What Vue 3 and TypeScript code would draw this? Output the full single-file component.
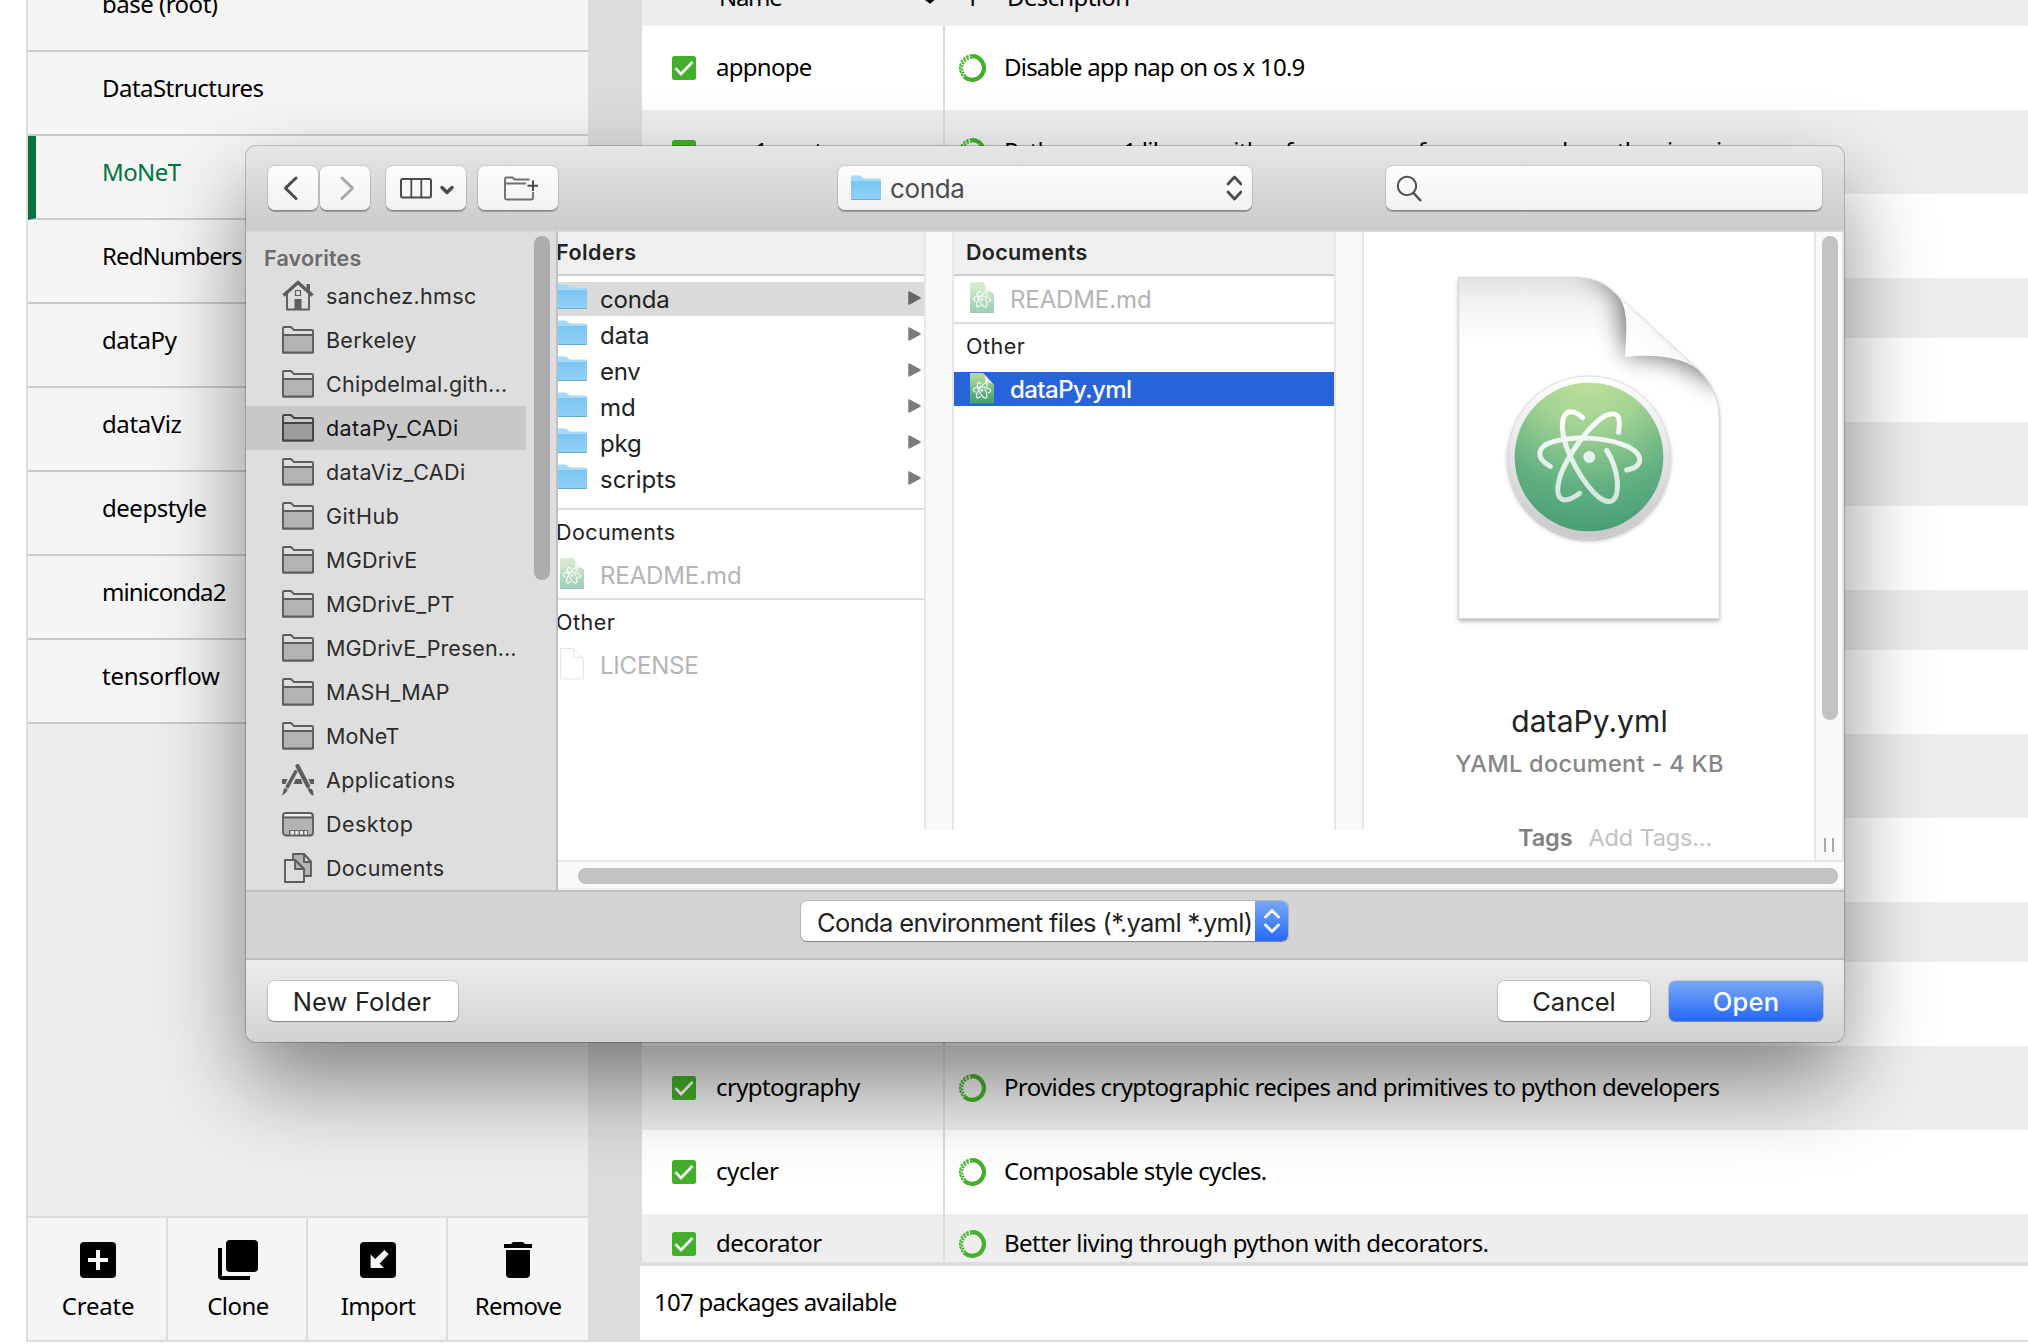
<script setup lang="ts">
interface Label { text: string; w: number }
interface Place extends Label { icon: 'home' | 'folder' | 'apps' | 'desktop' | 'docs'; selected?: boolean }
interface Pkg { name?: Label; desc?: Label; short?: boolean }

// Tracks a label out (or in) so that it fills the given width in pixels.
const vFit = {
  mounted(el: HTMLElement, binding: { value: number }) {
    const natural = el.getBoundingClientRect().width
    const count = (el.textContent ?? '').length
    el.style.letterSpacing = ((binding.value + 1.5 - natural) / count).toFixed(3) + 'px'
  },
}

const environments: (Label & { active?: boolean })[] = [
  { text: 'base (root)', w: 114 },
  { text: 'DataStructures', w: 160 },
  { text: 'MoNeT', w: 77, active: true },
  { text: 'RedNumbers', w: 138 },
  { text: 'dataPy', w: 73 },
  { text: 'dataViz', w: 78 },
  { text: 'deepstyle', w: 103 },
  { text: 'miniconda2', w: 122 },
  { text: 'tensorflow', w: 116 },
]

const packages: Pkg[] = [
  { name: { text: 'appnope', w: 94 }, desc: { text: 'Disable app nap on os x 10.9', w: 299 } },
  { name: { text: 'asn1crypto', w: 119 }, desc: { text: 'Python asn1 library with a focus on performance and a pythonic api', w: 716 } },
  {},
  { short: true },
  {},
  {},
  {},
  { short: true },
  {},
  {},
  {},
  { short: true },
  {},
  { name: { text: 'cryptography', w: 142 }, desc: { text: 'Provides cryptographic recipes and primitives to python developers', w: 714 } },
  { name: { text: 'cycler', w: 61 }, desc: { text: 'Composable style cycles.', w: 261 } },
  { name: { text: 'decorator', w: 104 }, desc: { text: 'Better living through python with decorators.', w: 483 }, short: true },
]

const places: Place[] = [
  { text: 'sanchez.hmsc', w: 149, icon: 'home' },
  { text: 'Berkeley', w: 89, icon: 'folder' },
  { text: 'Chipdelmal.gith...', w: 180, icon: 'folder' },
  { text: 'dataPy_CADi', w: 131, icon: 'folder', selected: true },
  { text: 'dataViz_CADi', w: 138, icon: 'folder' },
  { text: 'GitHub', w: 72, icon: 'folder' },
  { text: 'MGDrivE', w: 90, icon: 'folder' },
  { text: 'MGDrivE_PT', w: 127, icon: 'folder' },
  { text: 'MGDrivE_Presen...', w: 189, icon: 'folder' },
  { text: 'MASH_MAP', w: 122, icon: 'folder' },
  { text: 'MoNeT', w: 72, icon: 'folder' },
  { text: 'Applications', w: 128, icon: 'apps' },
  { text: 'Desktop', w: 86, icon: 'desktop' },
  { text: 'Documents', w: 117, icon: 'docs' },
]

const folders: Label[] = [
  { text: 'conda', w: 68 },
  { text: 'data', w: 48 },
  { text: 'env', w: 39 },
  { text: 'md', w: 34 },
  { text: 'pkg', w: 40 },
  { text: 'scripts', w: 75 },
]

const orbits = [
  'M398 449C366 420 336 424 337 480C340 545 400 650 448 689C490 718 505 690 502 640C498 600 485 570 470 547',
  'M506 493C514 441 500 429 466 443C412 475 352 566 332 620C310 690 332 718 389 676',
  'M301 595C255 570 260 535 310 521C380 500 480 510 538 538C583 563 578 597 530 606',
]
</script>

<template>
  <div class="screen">
    <svg width="0" height="0" class="defs">
      <defs>
        <linearGradient id="green" x1="0" y1="0" x2="0" y2="1">
          <stop offset="0" stop-color="#b9de9b" /><stop offset=".25" stop-color="#9fd094" />
          <stop offset=".6" stop-color="#67b384" /><stop offset="1" stop-color="#459b72" />
        </linearGradient>
        <linearGradient id="blue" x1="0" y1="0" x2="0" y2="1">
          <stop offset="0" stop-color="#7cc5f2" /><stop offset="1" stop-color="#8fd2f9" />
        </linearGradient>
        <symbol id="bluefolder" viewBox="0 0 30 26">
          <path d="M0 2Q0 .5 1.500 .5H8.500Q10 .5 11 2L12.500 3.500H28.500Q30 3.500 30 5V10H0Z" fill="#a3dafa" />
          <path d="M0 6H30V24Q30 25 29 25H1Q0 25 0 24Z" fill="url(#blue)" />
          <path d="M0 24.500H30" stroke="#6bacd2" />
        </symbol>
        <symbol id="atomfile" viewBox="0 0 24 32">
          <path d="M0 0H13L24 12V31H0Z" fill="url(#green)" />
          <path d="M0 30.500H24" stroke="#3d8a63" />
          <path d="M13 0C15.500 2.500 15.500 6 15 9.500C18.500 9.300 22 9.500 24 12Z" fill="#e9f3e4" />
          <g transform="translate(-12.300 -15.500) scale(.058)" fill="none" stroke="#eefaf0" stroke-width="22" stroke-linecap="round">
            <path v-for="o in orbits" :key="o" :d="o" />
            <circle cx="418" cy="567" r="12" fill="#eefaf0" />
          </g>
        </symbol>
        <symbol id="check" viewBox="0 0 24 24">
          <rect width="24" height="24" rx="2.500" fill="#43b02a" />
          <path d="M3.500 12.200L9 18L20.500 6" fill="none" stroke="#fff" stroke-width="2.600" />
        </symbol>
        <symbol id="ring" viewBox="0 0 28 28">
          <path d="M14 2.200A11.800 11.800 0 1 1 6.500 23" fill="none" stroke="#43b02a" stroke-width="4.200" />
          <path d="M7.500 24.500A12.800 12.800 0 0 1 14 1.200" fill="none" stroke="#43b02a" stroke-width="2" stroke-dasharray="2.600 1" />
          <path d="M7.500 22A10.600 10.600 0 0 1 15 3.600" fill="none" stroke="#43b02a" stroke-width="2.300" stroke-dasharray="1.900 1.300" />
        </symbol>
      </defs>
    </svg>

    <section class="envs">
      <div class="envlist">
        <div v-for="e in environments" :key="e.text" class="env" :class="{ active: e.active }">
          <span v-fit="e.w">{{ e.text }}</span>
        </div>
      </div>
      <div class="actions">
        <button class="action">
          <svg width="48" height="48" viewBox="0 0 24 24"><path d="M19 3H5a2 2 0 0 0-2 2v14a2 2 0 0 0 2 2h14a2 2 0 0 0 2-2V5a2 2 0 0 0-2-2zm-2 10h-4v4h-2v-4H7v-2h4V7h2v4h4z" /></svg>
          <span v-fit="71">Create</span>
        </button>
        <button class="action">
          <svg width="48" height="48" viewBox="0 0 24 24"><path d="M4 6H2v14a2 2 0 0 0 2 2h14v-2H4zM20 2H8a2 2 0 0 0-2 2v12a2 2 0 0 0 2 2h12a2 2 0 0 0 2-2V4a2 2 0 0 0-2-2z" /></svg>
          <span v-fit="60">Clone</span>
        </button>
        <button class="action">
          <svg width="48" height="48" viewBox="0 0 24 24"><path d="M19 3H5a2 2 0 0 0-2 2v14a2 2 0 0 0 2 2h14a2 2 0 0 0 2-2V5a2 2 0 0 0-2-2zM15 16H8.300V9.200L10.600 11.500L15.200 7L17.300 9.100L12.800 13.700Z" /></svg>
          <span v-fit="73">Import</span>
        </button>
        <button class="action">
          <svg width="48" height="48" viewBox="0 0 24 24"><path d="M6 19a2 2 0 0 0 2 2h8a2 2 0 0 0 2-2V7H6zM19 4h-3.500l-1-1h-5l-1 1H5v2h14z" /></svg>
          <span v-fit="85">Remove</span>
        </button>
      </div>
    </section>

    <section class="pkgs">
      <header class="thead">
        <div class="h-name"><span v-fit="61">Name</span></div>
        <div class="h-sort"><svg width="10" height="4" viewBox="0 0 10 4"><path d="M0 0H9.500L5 3.800Z" /></svg></div>
        <div class="h-t"><span>T</span></div>
        <div class="h-desc"><span v-fit="121">Description</span></div>
      </header>
      <div class="rows">
        <div v-for="(p, i) in packages" :key="i" class="row" :class="{ short: p.short, odd: i % 2 }">
          <div class="c-name">
            <template v-if="p.name">
              <svg width="24" height="24"><use href="#check" /></svg>
              <span v-fit="p.name.w">{{ p.name.text }}</span>
            </template>
          </div>
          <div v-if="p.desc" class="c-desc">
            <svg width="28" height="28"><use href="#ring" /></svg>
            <span v-fit="p.desc.w">{{ p.desc.text }}</span>
          </div>
        </div>
      </div>
      <footer class="count"><span v-fit="241">107 packages available</span></footer>
    </section>

    <div class="dialog">
      <div class="toolbar">
        <button class="tb back"><svg width="50" height="44" viewBox="0 0 50 44"><path d="M28 12L17.500 22.200L28 32.500" fill="none" stroke="#4b4b4b" stroke-width="3" stroke-linecap="round" stroke-linejoin="round" /></svg></button>
        <button class="tb fwd"><svg width="50" height="44" viewBox="0 0 50 44"><path d="M22 12L32.500 22.200L22 32.500" fill="none" stroke="#a8a8a8" stroke-width="3" stroke-linecap="round" stroke-linejoin="round" /></svg></button>
        <button class="tb view">
          <svg width="80" height="44" viewBox="0 0 80 44" fill="none" stroke="#4b4b4b"><rect x="15" y="13" width="30" height="18.500" rx="1.500" stroke-width="2" /><path d="M25.300 13V31.500M35.300 13V31.500" stroke-width="1.800" /><path d="M56 21.500L61 26.500L66 21.500" stroke-width="3.500" stroke-linecap="round" stroke-linejoin="round" /></svg>
        </button>
        <button class="tb newf">
          <svg width="80" height="44" viewBox="0 0 80 44" fill="none" stroke="#707070" stroke-width="1.900"><path d="M51.500 13.500H36.500L34.500 11.500H28.500Q27 11.500 27 13V32Q27 33.500 28.500 33.500H53.500Q55 33.500 55 32V26M27.500 17.500H48" /><path d="M55 14.500V25M49.500 19.700H60" stroke="#4b4b4b" stroke-width="2" /></svg>
        </button>
        <div class="tb path">
          <svg width="30" height="26"><use href="#bluefolder" /></svg>
          <span v-fit="73">conda</span>
          <svg class="updown" width="16" height="26" viewBox="0 0 16 26"><path d="M2 9L8.500 2L15 9M2 17L8.500 24L15 17" fill="none" stroke="#4b4b4b" stroke-width="2.700" stroke-linecap="round" stroke-linejoin="round" /></svg>
        </div>
        <div class="tb search">
          <svg width="28" height="30" viewBox="0 0 28 30" fill="none" stroke="#4f4f4f"><circle cx="11" cy="13" r="9.200" stroke-width="2" /><path d="M17.500 20L25 28" stroke-width="2.500" /></svg>
        </div>
      </div>

      <div class="browser">
        <aside class="side">
          <div class="fav"><span v-fit="96">Favorites</span></div>
          <div v-for="p in places" :key="p.text" class="place" :class="{ sel: p.selected }">
            <svg v-if="p.icon === 'folder'" width="32" height="32" viewBox="0 0 32 32">
              <path d="M1 4Q1 3 2 3H9L12 6H30Q31 6 31 7V28.500H1Z" class="line light" /><path d="M1 11H31V27.500Q31 28.500 30 28.500H2Q1 28.500 1 27.500Z" class="line fillg" />
            </svg>
            <svg v-else-if="p.icon === 'home'" width="32" height="32" viewBox="0 0 32 32">
              <path d="M5 14V29.500H27V14" class="line" /><path d="M1.500 15.500L16 2.500L30.500 15.500" fill="none" stroke="#5d5d5d" stroke-width="3.500" /><path d="M24.500 4H28V12L24.500 9Z" fill="#5d5d5d" />
              <path d="M13.500 10.500H18.500V15.500H13.500Z" fill="none" stroke="#5d5d5d" stroke-width="1.200" /><path d="M12.500 19H19.500V30H12.500Z" fill="#5d5d5d" />
            </svg>
            <svg v-else-if="p.icon === 'apps'" width="32" height="32" viewBox="0 0 32 32">
              <path d="M0 15H5.500L3.500 20H0ZM13.500 15H19L20.500 20H11.500ZM26.500 15H32V20H28.500Z" fill="#5d5d5d" />
              <path d="M13 9L3 27" stroke="#5d5d5d" stroke-width="3.600" stroke-dasharray="17 1 3" /><path d="M0 32L2 25L5 27.500Z" fill="#5d5d5d" />
              <path d="M15.500 2L26 22" stroke="#5d5d5d" stroke-width="4.200" stroke-linecap="round" /><path d="M25.500 24L30 25Q32 28 31.500 32Q27 30 25.500 24Z" fill="#5d5d5d" /><circle cx="13.500" cy="8" r="2" fill="#5d5d5d" />
            </svg>
            <svg v-else-if="p.icon === 'desktop'" width="32" height="32" viewBox="0 0 32 32">
              <rect x="1" y="5" width="30" height="22.500" rx="3" class="line fillg" /><path d="M3 6H29V8.500H2Z" fill="#eee" /><path d="M1 9.500H31" class="line" />
              <path d="M7 22H26V27H7Z" fill="#666" /><path d="M8.500 23H12V26.500H8.500ZM13.300 23H16.500V26.500H13.300ZM18 23H21V26.500H18ZM22.500 23H25V26.500H22.500Z" fill="#eee" />
            </svg>
            <svg v-else width="32" height="32" viewBox="0 0 32 32">
              <path d="M11 2H22L29 10V24H11Z" class="line fillg" /><path d="M22 2V10H29Z" class="line light" />
              <path d="M3 8H13L22 17V30H3Z" class="line light" /><path d="M13 8V17H22Z" class="line fillg" />
            </svg>
            <span v-fit="p.w">{{ p.text }}</span>
          </div>
          <i class="side-thumb"></i>
        </aside>

        <div class="finder">
          <div class="columns">
            <div class="col one">
              <div class="chead"><span v-fit="79">Folders</span></div>
              <div class="gap6"></div>
              <div v-for="(f, i) in folders" :key="f.text" class="file" :class="{ cur: i === 0 }">
                <svg class="fold" width="30" height="26"><use href="#bluefolder" /></svg>
                <span v-fit="f.w">{{ f.text }}</span>
                <svg class="tri" width="13" height="14" viewBox="0 0 13 14"><path d="M1 1L12 7L1 13Z" stroke-width="1.500" stroke-linejoin="round" /></svg>
              </div>
              <div class="sub first"><span v-fit="118">Documents</span></div>
              <div class="file dim tall"><svg class="doc" width="24" height="32"><use href="#atomfile" /></svg><span v-fit="140">README.md</span></div>
              <div class="sub"><span v-fit="58">Other</span></div>
              <div class="file dim tall">
                <svg class="doc plain" width="24" height="32" viewBox="0 0 24 32"><path d="M.5 .5H14L23.500 10.500V31H.5Z" fill="#fff" stroke="#cfcfcf" /><path d="M14 .5V9.500H23" fill="none" stroke="#cfcfcf" /></svg>
                <span v-fit="97">LICENSE</span>
              </div>
            </div>
            <div class="grip"></div>
            <div class="col two">
              <div class="chead"><span v-fit="120">Documents</span></div>
              <div class="file dim readme"><svg class="doc" width="24" height="32"><use href="#atomfile" /></svg><span v-fit="140">README.md</span></div>
              <div class="sub other"><span v-fit="58">Other</span></div>
              <div class="file chosen"><svg class="doc" width="24" height="32"><use href="#atomfile" /></svg><span v-fit="120">dataPy.yml</span></div>
            </div>
            <div class="grip g2"></div>
            <div class="preview">
              <svg class="paper" width="280" height="362" viewBox="0 0 840 1086">
                <defs>
                  <linearGradient id="top" x1="0" y1="0" x2="0" y2="1"><stop offset="0" stop-color="#e2e2e2" /><stop offset=".07" stop-color="#f2f2f2" /><stop offset=".2" stop-color="#fff" /></linearGradient>
                  <linearGradient id="curl" gradientUnits="userSpaceOnUse" x1="640" y1="165" x2="560" y2="245"><stop offset="0" stop-color="#e2e2e2" /><stop offset=".4" stop-color="#fafafa" /><stop offset="1" stop-color="#fff" /></linearGradient>
                  <linearGradient id="rim" x1="0" y1="0" x2="0" y2="1"><stop offset="0" stop-color="#fff" /><stop offset="1" stop-color="#c8c8c8" /></linearGradient>
                  <linearGradient id="orbit" gradientUnits="userSpaceOnUse" x1="0" y1="430" x2="0" y2="710"><stop offset="0" stop-color="#fff" /><stop offset="1" stop-color="#cfe5da" /></linearGradient>
                  <radialGradient id="disc" cx=".5" cy="-.1" r="1.150"><stop offset="0" stop-color="#c3e49d" /><stop offset=".35" stop-color="#a3d293" /><stop offset=".7" stop-color="#62b082" /><stop offset="1" stop-color="#459b72" /></radialGradient>
                  <filter id="soft" x="-50%" y="-50%" width="200%" height="200%"><feGaussianBlur stdDeviation="36" /></filter>
                  <filter id="drop" x="-10%" y="-10%" width="120%" height="120%"><feDropShadow dx="0" dy="7" stdDeviation="6" flood-opacity=".33" /></filter>
                  <clipPath id="sheet"><path d="M26 28H370C440 30 470 50 500 80L745 305C785 345 808 390 808 460V1052H26Z" /></clipPath>
                </defs>
                <path filter="url(#drop)" d="M26 28H370C440 30 470 50 500 80L745 305C785 345 808 390 808 460V1052H26Z" fill="#fff" />
                <g clip-path="url(#sheet)">
                  <rect x="26" y="28" width="782" height="1024" fill="url(#top)" />
                  <path d="M400 20L500 60L528 265C620 255 700 275 830 370V250L500 0Z" fill="#000" opacity=".55" filter="url(#soft)" />
                </g>
                <path d="M26 28H370C440 30 470 50 500 80L745 305C785 345 808 390 808 460V1052H26Z" fill="none" stroke="#d4d4d4" stroke-width="3" />
                <path d="M500 80C540 120 528 200 526 267C610 258 690 265 745 305Z" fill="url(#curl)" />
                <circle cx="417" cy="567" r="243" fill="url(#rim)" stroke="#cfcfcf" stroke-width="2" filter="url(#drop)" />
                <circle cx="417" cy="567" r="223" fill="url(#disc)" />
                <g fill="none" stroke="url(#orbit)" stroke-width="15" stroke-linecap="round"><path v-for="o in orbits" :key="o" :d="o" /></g>
                <circle cx="418" cy="567" r="18" fill="#e6f2ec" />
              </svg>
              <div class="title"><span v-fit="155">dataPy.yml</span></div>
              <div class="kind"><span v-fit="267">YAML document - 4 KB</span></div>
              <div class="tags"><b v-fit="53">Tags</b><span v-fit="122">Add Tags...</span></div>
            </div>
            <div class="vtrack"><i class="vthumb"></i><i class="bars"></i></div>
          </div>
          <div class="htrack"><i class="hthumb"></i></div>
        </div>
      </div>

      <div class="filter">
        <div class="select">
          <span v-fit="434">Conda environment files (*.yaml *.yml)</span>
          <b><svg width="16" height="26" viewBox="0 0 16 26"><path d="M1.500 9L8 2.500L14.500 9M1.500 17L8 23.500L14.500 17" fill="none" stroke="#fff" stroke-width="2.700" stroke-linecap="round" stroke-linejoin="round" /></svg></b>
        </div>
      </div>
      <div class="buttons">
        <button class="btn nf"><span v-fit="137">New Folder</span></button>
        <button class="btn cancel"><span v-fit="82">Cancel</span></button>
        <button class="btn open"><span v-fit="65">Open</span></button>
      </div>
    </div>
  </div>
</template>

<style>
body { margin: 0; background: #fff; overflow: hidden; }
</style>

<style scoped>
* { box-sizing: border-box; }
button { border: 0; padding: 0; background: none; font: inherit; color: inherit; }
span, b { display: inline-block; white-space: nowrap; }
svg { display: block; flex: none; }
.defs { position: absolute; }
.screen { position: relative; width: 2028px; height: 1344px; overflow: hidden; display: flex; padding-left: 26px; background: #fff; font: 24px/32px 'Noto Sans', sans-serif; color: #000; }

.envs { width: 562px; height: 1342px; border-left: 2px solid #dcdcdc; border-bottom: 2px solid #dcdcdc; background: #ededed; display: flex; flex-direction: column; }
.envlist { flex: 1; min-height: 0; }
.env { height: 84px; border-bottom: 2px solid #cacaca; background: #f5f5f5; padding: 20px 0 0 74px; }
.env:first-child { height: 52px; padding-top: 0; }
.env:first-child span { margin-top: -12px; vertical-align: top; }
.env.active { color: #00733e; border-left: 8px solid #00733e; padding-left: 66px; }
.actions { height: 124px; display: flex; border-top: 2px solid #dcdcdc; background: #f5f5f5; }
.action { width: 140px; display: flex; flex-direction: column; align-items: center; padding: 18px 0 0 2px; gap: 6px; border-right: 2px solid #dcdcdc; }
.action:last-child { border-right: 0; padding-left: 0; }

.pkgs { flex: 1; height: 1342px; background: #dcdcdc; padding-left: 52px; display: flex; flex-direction: column; }
.thead { height: 26px; flex: none; margin-left: 2px; background: #ededed; display: flex; align-items: flex-start; padding-left: 77px; }
.thead > div { display: flex; align-items: flex-start; }
.thead span { margin-top: -19px; }
.h-name { width: 206px; }
.h-sort { width: 41px; }
.h-t { width: 41px; }
.rows { height: 1236px; flex: none; margin-left: 2px; overflow: hidden; }
.row { height: 84px; background: #fff; display: flex; align-items: center; }
.row.short { height: 60px; }
.row.odd { background: #eee; }
.c-name { width: 303px; height: 100%; border-right: 2px solid #dcdcdc; display: flex; align-items: center; padding-left: 30px; gap: 20px; }
.c-desc { display: flex; align-items: center; padding-left: 13px; gap: 18px; }
.c-name span, .c-desc span { margin-top: -2px; }
.count { height: 76px; flex: none; margin-top: 4px; background: #fff; border-bottom: 2px solid #dcdcdc; padding: 20px 0 0 14px; }

.dialog { position: absolute; left: 246px; top: 146px; width: 1598px; height: 896px; border-radius: 10px; overflow: hidden; box-shadow: 0 0 0 1px rgba(0,0,0,.2), 0 40px 88px rgba(0,0,0,.45); background: #d4d4d4; font-family: Inter, sans-serif; color: #222; display: flex; flex-direction: column; }
.toolbar { height: 84px; flex: none; background: linear-gradient(#e6e6e6, #cbcbcb); display: flex; padding: 20px 22px; }
.tb { height: 44px; border-radius: 7px; background: linear-gradient(#fdfdfd, #f2f2f2); box-shadow: 0 0 0 1px rgba(0,0,0,.1), 0 1.500px 1px rgba(0,0,0,.28); display: flex; align-items: center; }
.back, .fwd { width: 50px; }
.fwd { margin-left: 2px; }
.view, .newf { width: 80px; }
.view { margin-left: 16px; }
.newf { margin-left: 12px; }
.path { width: 414px; margin-left: 280px; padding: 0 10px 0 13px; font-size: 26px; color: #4d4d4d; }
.path span { margin-left: 9px; margin-top: 2px; }
.updown { margin-left: auto; }
.search { width: 436px; margin-left: 134px; padding-left: 10px; }

.browser { height: 660px; display: flex; flex: none; }
.side { position: relative; width: 312px; border-right: 2px solid #c0c0c0; border-top: 2px solid #d4d4d4; background: #dedede; overflow: hidden; font-size: 21.500px; }
.fav { height: 42px; padding: 10px 0 0 18px; color: #6b6b6b; font-weight: 600; }
.place { width: 280px; height: 44px; display: flex; align-items: center; gap: 12px; padding-left: 36px; color: #2b2b2b; }
.place span { margin-top: -1px; }
.place.sel { background: #c8c8c9; color: #151515; }
.line { fill: none; stroke: #5d5d5d; stroke-width: 1.900; stroke-linejoin: round; }
.light { fill: #dedede; }
.fillg { fill: #b3b3b4; }
.sel .line { stroke: #444; }
.sel .light { fill: #c8c8c9; }
.sel .fillg { fill: #9d9d9e; }
.side-thumb { position: absolute; left: 288px; top: 4px; width: 16px; height: 344px; border-radius: 8px; background: #adadad; }

.finder { flex: 1; min-width: 0; background: #fff; border-top: 2px solid #d9d9d9; display: flex; flex-direction: column; }
.columns { height: 628px; display: flex; }
.col { height: 598px; overflow: hidden; font-size: 24px; }
.one { width: 366px; }
.two { width: 380px; }
.grip { width: 30px; height: 598px; background: #f9f9f9; border: 2px solid #e7e7e7; border-width: 0 2px; }
.chead { height: 44px; background: #efefef; border-bottom: 2px solid #cdcdcd; font-size: 21.500px; font-weight: 600; line-height: 40px; padding-left: 12px; }
.one .chead, .one .sub { padding-left: 0; }
.one .chead span, .one .sub span { margin-left: -2px; }
.gap6 { height: 6px; }
.file { height: 34px; margin-bottom: 2px; display: flex; align-items: center; }
.file span { position: relative; top: 1px; }
.one .file span { margin-left: 13px; }
.fold { margin-left: -1px; margin-top: -4px; }
.file.cur { background: #dadada; }
.tri { margin: -2px 3px 0 auto; fill: #7b7b7b; stroke: #7b7b7b; }
.cur .tri { fill: #666; stroke: #666; }
.one .doc { margin-left: 2px; }
.one .doc + span { margin-left: 16px; }
.sub { border-top: 2px solid #dedede; height: 46px; font-size: 21.500px; line-height: 44px; padding-left: 12px; }
.sub.first { margin-top: 12px; }
.file.tall { height: 36px; margin: 0 0 8px; padding-top: 4px; }
.tall span, .readme span { margin-top: 2px; }
.dim { color: #b4b4b4; }
.dim .doc { opacity: .5; }
.two .doc { margin-left: 16px; margin-right: 16px; }
.readme { height: 46px; margin: 0; padding-bottom: 3px; }
.other { height: 50px; }
.chosen { background: #2864d9; color: #fff; font-weight: 500; }
.preview { width: 450px; height: 628px; overflow: hidden; display: flex; flex-direction: column; align-items: center; padding-left: 2px; }
.paper { margin: 36px 0 0 0; }
.title { margin: 72px 1px 0 0; height: 38px; line-height: 38px; font-size: 30px; }
.kind { margin: 8px 1px 0 0; font-size: 23.500px; font-weight: 500; color: #868686; height: 32px; }
.tags { display: flex; gap: 16px; margin: 42px 0 0 50px; font-size: 23.500px; color: #c2c2c2; }
.tags b { font-weight: 600; color: #808080; }
.vtrack { position: relative; width: 30px; height: 628px; border: 2px solid #e7e7e7; border-width: 0 2px; background: #fafafa; }
.vthumb { position: absolute; left: 6px; top: 4px; width: 16px; height: 484px; border-radius: 8px; background: #c2c2c2; }
.bars { position: absolute; left: 8px; top: 606px; width: 10px; height: 14px; border: 2px solid #a9a9a9; border-width: 0 2px; }
.htrack { height: 30px; background: #fafafa; border-top: 2px solid #e7e7e7; border-bottom: 2px solid #ececec; padding: 6px 6px 0 20px; }
.hthumb { display: block; height: 16px; border-radius: 8px; background: #c2c2c2; }

.filter { height: 70px; flex: none; border: 2px solid #bfbfbf; border-width: 2px 0; background: #d4d4d4; padding: 9px 0 0 555px; }
.select { width: 487px; height: 40px; border-radius: 6px; background: #fff; display: flex; align-items: center; justify-content: space-between; padding-left: 16px; font-size: 25.500px; overflow: hidden; box-shadow: 0 0 0 1px rgba(0,0,0,.13), 0 1px 1px rgba(0,0,0,.3); }
.select span { margin-top: 3px; }
.select b { width: 33px; height: 40px; background: linear-gradient(#7aa9f7, #2668f8); display: flex; align-items: center; justify-content: center; }
.buttons { flex: 1; background: linear-gradient(#ececec, #d2d2d2); display: flex; padding: 21px 21px 0 22px; font-size: 25.500px; }
.btn { height: 40px; border-radius: 6px; background: #fff; box-shadow: 0 0 0 1px rgba(0,0,0,.13), 0 1px 1px rgba(0,0,0,.3); }
.btn span { margin-top: 2px; }
.nf { width: 190px; padding-right: 2px; }
.cancel { width: 152px; margin-left: auto; }
.open { width: 154px; margin-left: 19px; color: #fff; font-weight: 500; background: linear-gradient(#78a8f6, #2668f8); }
</style>
